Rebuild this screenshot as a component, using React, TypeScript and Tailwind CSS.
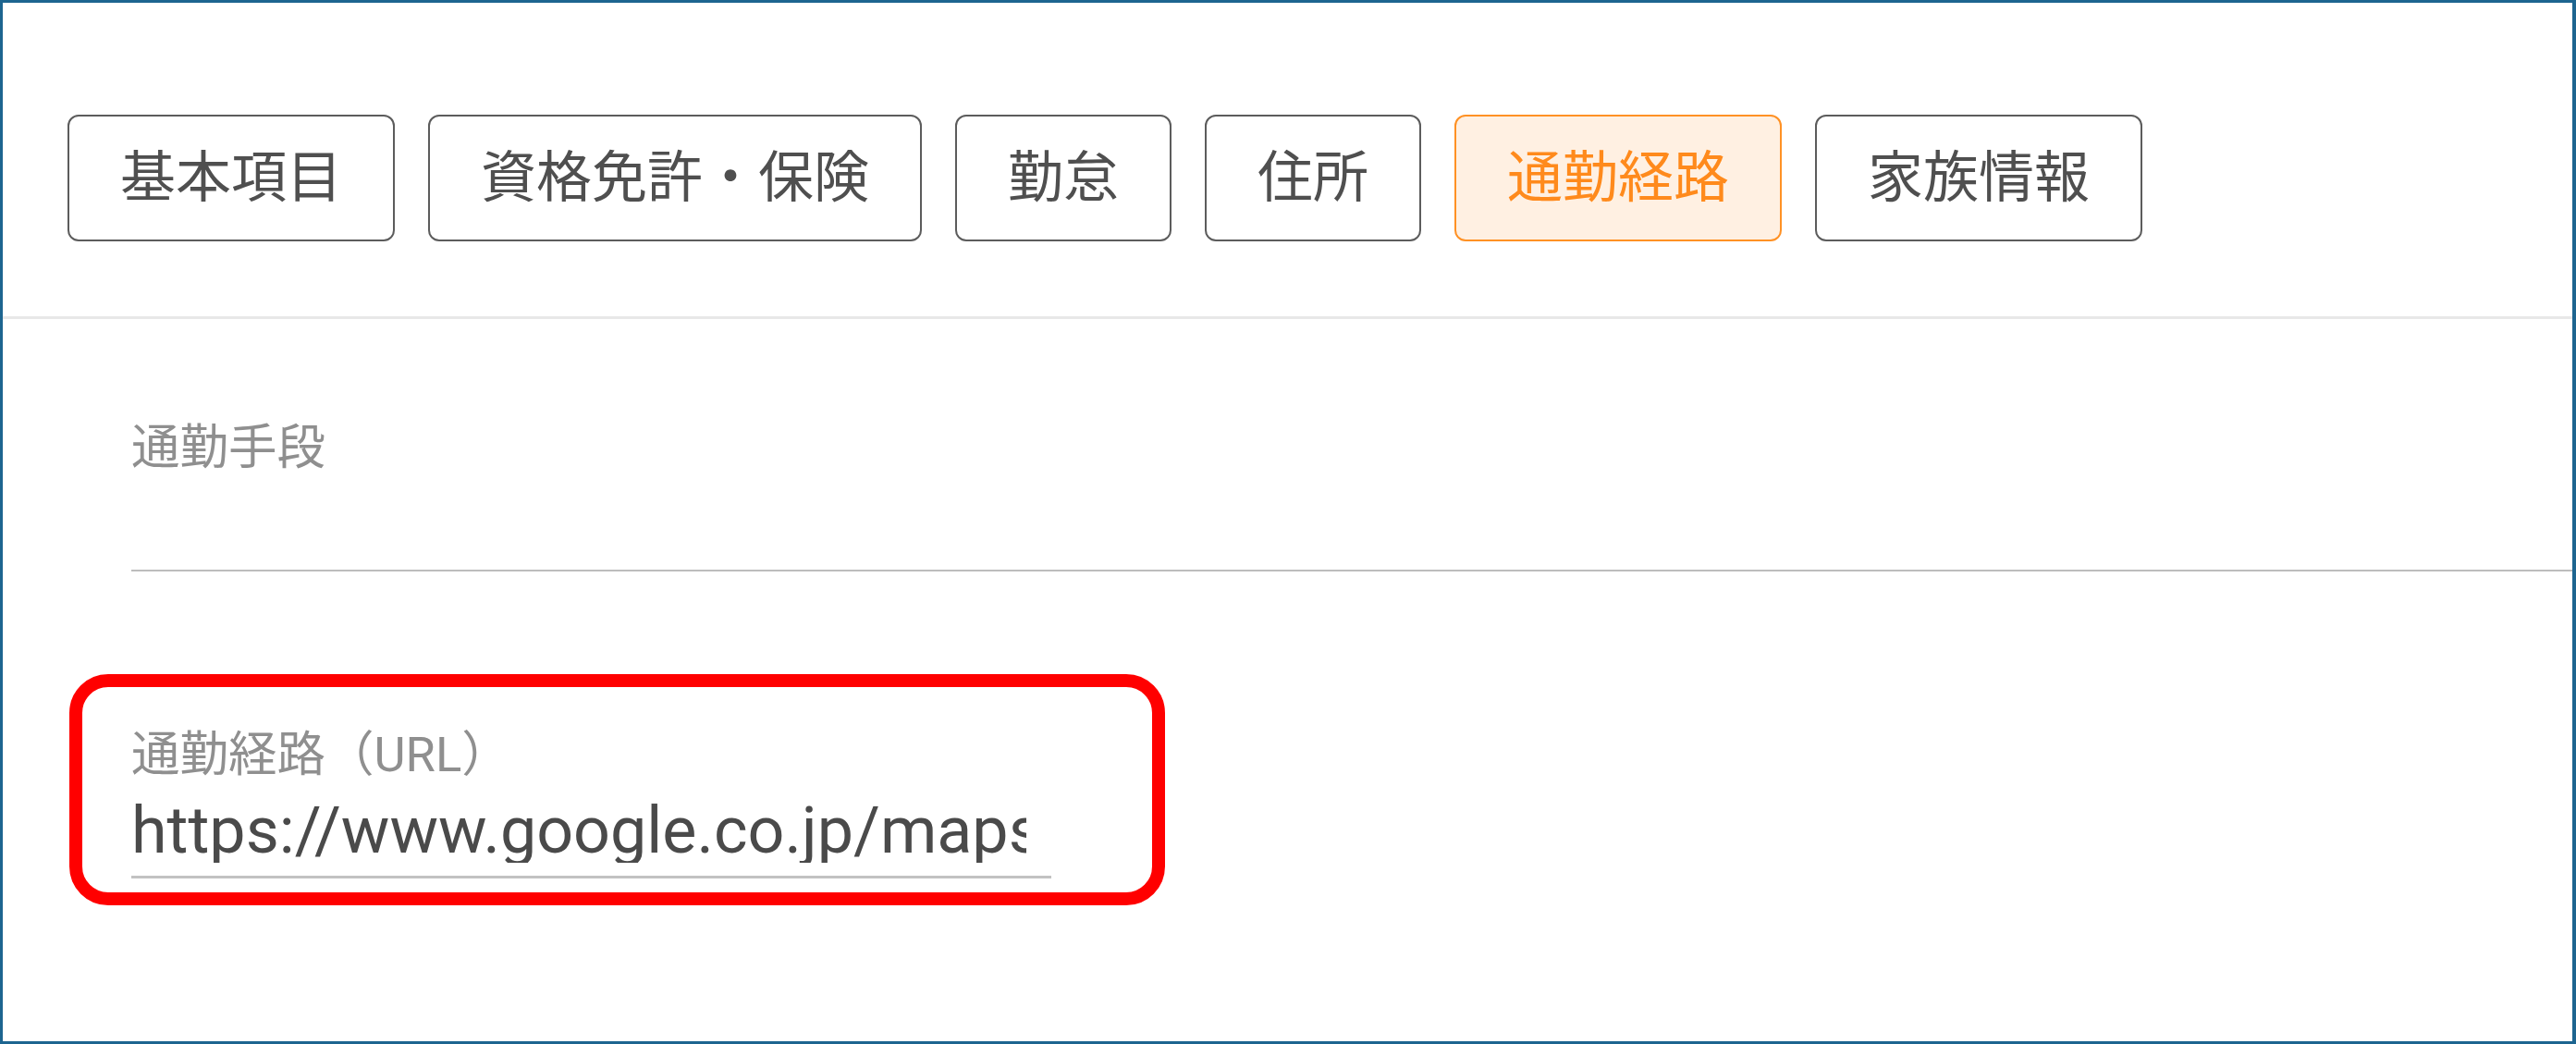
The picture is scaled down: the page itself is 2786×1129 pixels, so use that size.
import React from 'react'

const tabs = ['基本項目', '資格免許・保険', '勤怠', '住所', '通勤経路', '家族情報']
const font = { fontFamily: 'Roboto, "Noto Sans CJK JP", sans-serif' }

export default function App() {
  const active = '通勤経路'

  return (
    <div
      className="w-[2786px] h-[1129px] bg-white border-[3px] border-r-4 border-[#1d6590] flex flex-col"
      style={font}
    >
      <div className="flex gap-[36px] pl-[70px] pt-[121px]">
        {tabs.map((t) => (
          <button
            key={t}
            className={
              t === active
                ? 'h-[137px] px-[55px] rounded-[12px] border-2 border-[#ff9124] bg-[#fff0e2] text-[#ff8a1c] text-[60px] leading-none'
                : 'h-[137px] px-[55px] rounded-[12px] border-2 border-[#5c5c5c] bg-white text-[#4f4f4f] text-[60px] leading-none'
            }
          >
            {t}
          </button>
        ))}
      </div>

      <div className="mt-[81px] h-[3px] bg-[#e8e8e8]" />

      <div className="flex flex-col pl-[139px]">
        {/* 通勤手段 */}
        <div className="mt-[113px] flex flex-col">
          <label className="text-[52.5px] leading-none text-[#8f8f8f]">通勤手段</label>
          <div className="mt-[21px] h-[70px] mb-[14px]" />
          <div className="h-[2px] bg-[#bdbdbd]" />
        </div>

        {/* 通勤経路（URL） */}
        <div className="relative mt-[172px] w-[995px] flex flex-col">
          <label className="text-[52.5px] leading-none text-[#8f8f8f]">通勤経路（URL）</label>
          <div className="mt-[21px] mb-[14px] w-[968px] overflow-hidden whitespace-nowrap text-[70px] leading-none text-[#4a4a4a]">
            https://www.google.co.jp/maps/dir/
          </div>
          <div className="h-[3px] bg-[#c2c2c2]" />
          <div className="absolute left-[-67px] top-[-61px] w-[1185px] h-[250px] rounded-[42px] border-[14px] border-[#ff0000] pointer-events-none" />
        </div>
      </div>
    </div>
  )
}
